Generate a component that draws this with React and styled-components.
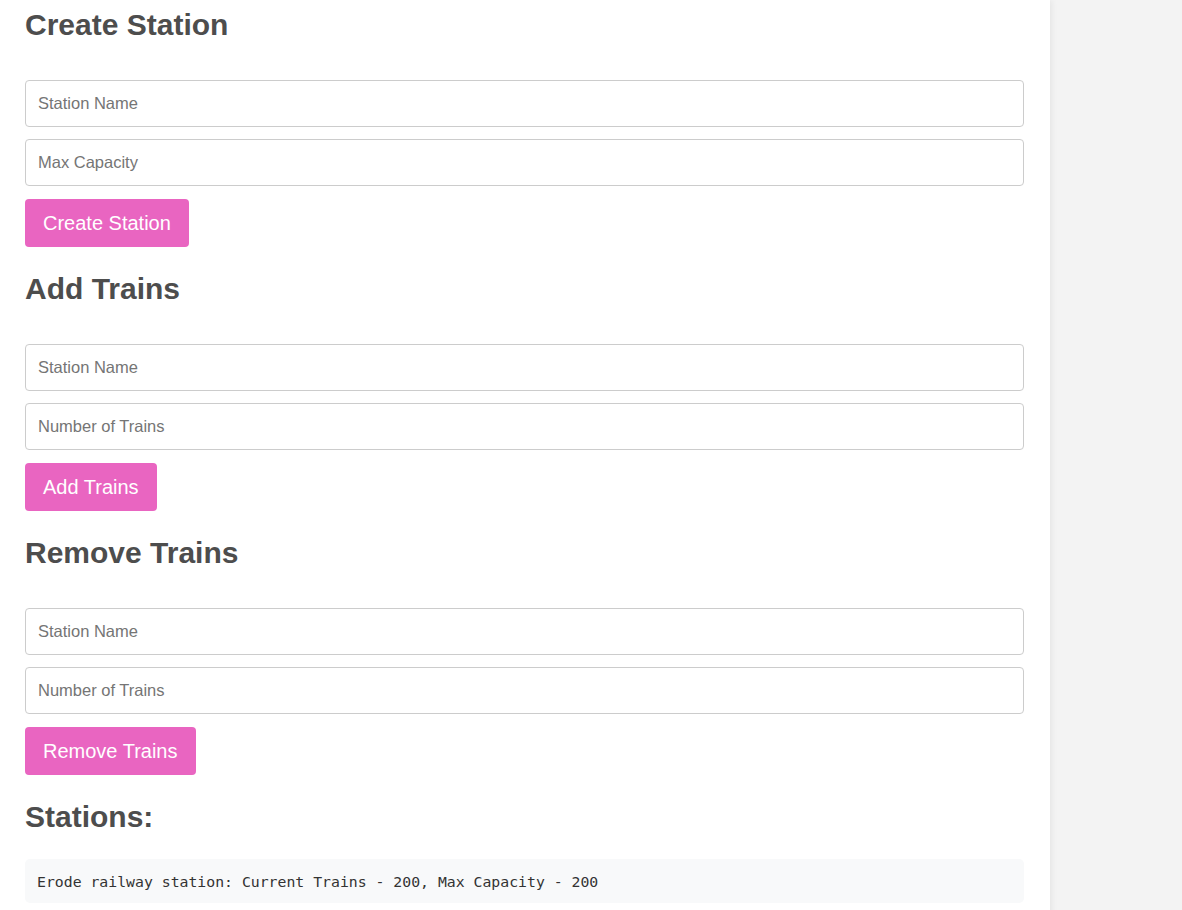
import React from "react";
import styled, { createGlobalStyle } from "styled-components";

const GlobalStyle = createGlobalStyle`
  html, body {
    margin: 0;
    padding: 0;
    background: #f3f3f3;
    font-family: "Liberation Sans", Arial, sans-serif;
  }
`;

const sections = [
  {
    title: "Create Station",
    fields: ["Station Name", "Max Capacity"],
    action: "Create Station",
  },
  {
    title: "Add Trains",
    fields: ["Station Name", "Number of Trains"],
    action: "Add Trains",
  },
  {
    title: "Remove Trains",
    fields: ["Station Name", "Number of Trains"],
    action: "Remove Trains",
  },
];

const stations = [
  { name: "Erode railway station", trains: 200, capacity: 200 },
];

const App = () => {
  return (
    <>
      <GlobalStyle />
      <Page>
        <Container>
          {sections.map(section => (
            <Section key={section.title}>
              <Heading>{section.title}</Heading>
              <Fields>
                {section.fields.map(field => (
                  <Input key={field} type="text" placeholder={field} />
                ))}
                <Button>{section.action}</Button>
              </Fields>
            </Section>
          ))}
          <Section>
            <Heading compact>Stations:</Heading>
            <StationList>
              {stations.map(s => (
                <StationItem key={s.name}>
                  {s.name}: Current Trains - {s.trains}, Max Capacity -{" "}
                  {s.capacity}
                </StationItem>
              ))}
            </StationList>
          </Section>
        </Container>
      </Page>
    </>
  );
};

const Page = styled.div`
  min-height: 910px;
  display: flex;
`;

const Container = styled.main`
  width: 1050px;
  box-sizing: border-box;
  background: #ffffff;
  padding: 8px 26px 40px 25px;
  box-shadow: 2px 0 6px rgba(0, 0, 0, 0.06);
  display: flex;
  flex-direction: column;
  gap: 25px;
`;

const Section = styled.section`
  display: flex;
  flex-direction: column;
`;

const Heading = styled.h2`
  margin: 0 0 ${props => (props.compact ? "25px" : "38px")};
  font-size: 30px;
  line-height: 34px;
  font-weight: 700;
  color: #4d4d4d;
`;

const Fields = styled.div`
  display: flex;
  flex-direction: column;
  align-items: flex-start;
  gap: 12px;
`;

const Input = styled.input`
  width: 100%;
  height: 47px;
  box-sizing: border-box;
  padding: 0 12px;
  border: 1px solid #cccccc;
  border-radius: 4px;
  font-family: "Liberation Sans", Arial, sans-serif;
  font-size: 16.5px;
  color: #333;
  outline: none;

  &::placeholder {
    color: #757575;
  }
`;

const Button = styled.button`
  height: 48px;
  margin-top: 1px;
  padding: 0 18px;
  border: none;
  border-radius: 4px;
  background: #e965c1;
  color: #ffffff;
  font-family: "Liberation Sans", Arial, sans-serif;
  font-size: 20px;
  cursor: pointer;
`;

const StationList = styled.ul`
  list-style: none;
  margin: 0;
  padding: 0;
  display: flex;
  flex-direction: column;
  gap: 8px;
`;

const StationItem = styled.li`
  background: #f8f9fa;
  border-radius: 5px;
  padding: 0 12px;
  height: 44px;
  display: flex;
  align-items: center;
  font-family: "DejaVu Sans Mono", "Liberation Mono", monospace;
  font-size: 14.8px;
  color: #333;
`;

export default App;
